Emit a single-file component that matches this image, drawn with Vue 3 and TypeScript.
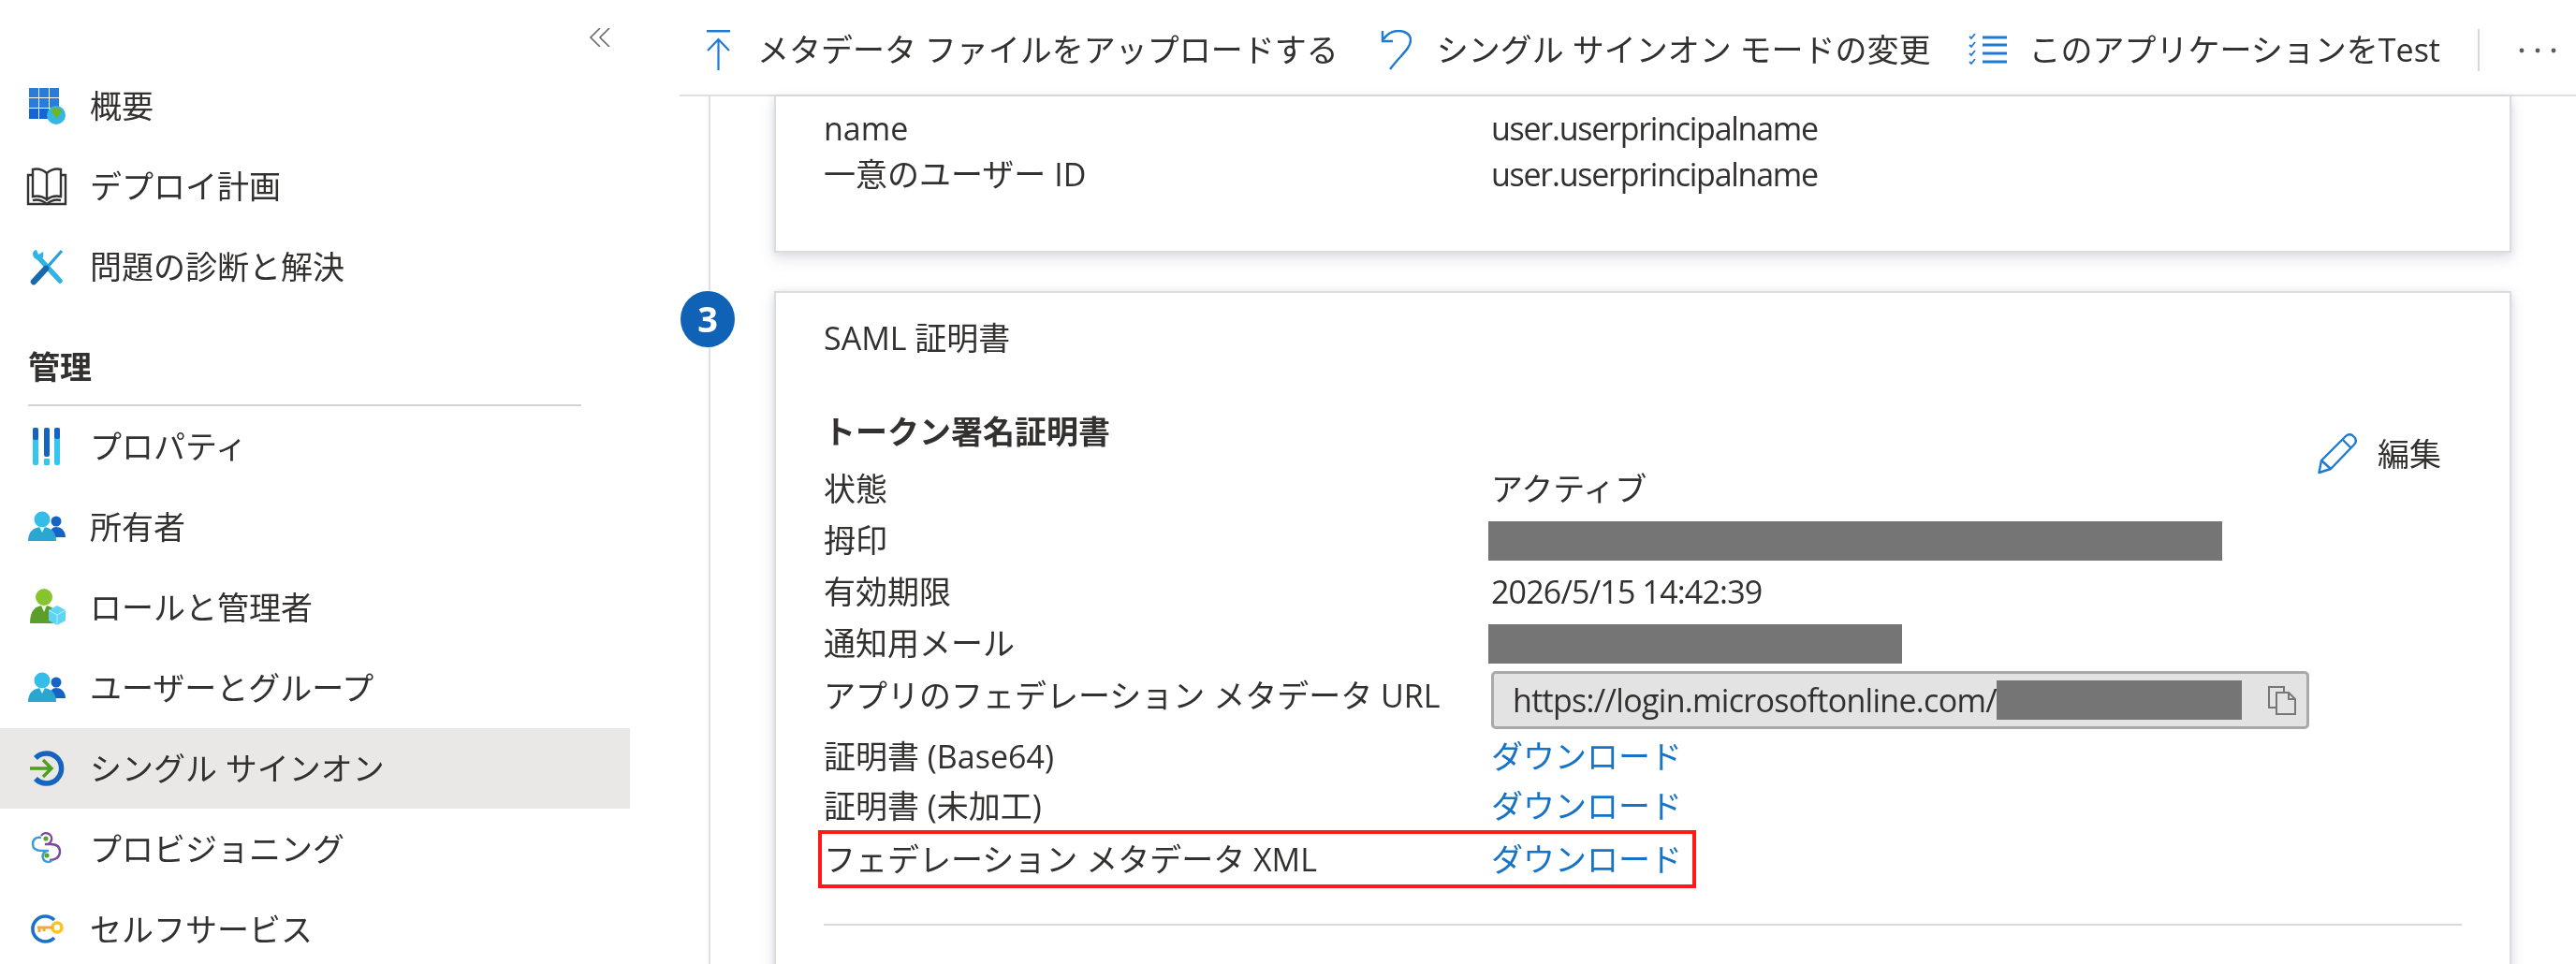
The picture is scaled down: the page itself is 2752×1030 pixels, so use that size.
<script setup lang="ts">
interface Row { label: string; value: string; }
const claims: Row[] = [
  { label: 'name', value: 'user.userprincipalname' },
  { label: '一意のユーザー ID', value: 'user.userprincipalname' },
];
</script>

<template>
  <div class="page">
    <aside class="side">
      <div class="collapse">
        <svg width="22" height="20" viewBox="0 0 22 20" fill="none" stroke="#6b6b6b" stroke-width="1.6"><path d="M11 0 1 10l10 10M21 0 11 10l10 10"/></svg>
      </div>
      <a class="item">
        <svg class="ic" viewBox="0 0 46 46">
          <g fill="#2b7cd8">
            <rect x="4" y="4" width="10" height="10"/><rect x="15" y="4" width="10" height="10"/><rect x="26" y="4" width="10" height="10"/>
            <rect x="4" y="15" width="10" height="10"/><rect x="15" y="15" width="10" height="10"/><rect x="26" y="15" width="10" height="10"/>
            <rect x="4" y="26" width="10" height="11" fill="#1268d0"/><rect x="15" y="26" width="10" height="11" fill="#1268d0"/>
          </g>
          <circle cx="33" cy="33" r="10" fill="#35b6e4"/>
          <path d="M30 25c4-1 7 1 9 4-1 3-3 3-4 6-2 2-3 3-3 0 0-3-4-3-4-6 0-2 1-3 2-4z" fill="#6fb52c"/>
        </svg>
        <span>概要</span>
      </a>
      <a class="item">
        <svg class="ic" viewBox="0 0 46 46" fill="none" stroke="#333" stroke-width="2.4">
          <path d="M8 11H3v31h40V11h-5"/>
          <path d="M8 5q8-2 15 4v28q-7-5-15-3zM38 5q-8-2-15 4v28q7-5 15-3z"/>
          <path d="M8 38q8-2 15 4 7-6 15-4"/>
        </svg>
        <span>デプロイ計画</span>
      </a>
      <a class="item">
        <svg class="ic" viewBox="0 0 46 46" fill="none">
          <path d="M15 14 37 38" stroke="#30b4e4" stroke-width="5.5" stroke-linecap="round"/>
          <path d="M8 9c0 4 3 7 8 7 3-1 4-5 3-9l-5 3-2-5c-2 0-4 2-4 4z" fill="#30b4e4"/>
          <path d="M22 25 39 6" stroke="#2aa0d8" stroke-width="3.2"/>
          <path d="M9 39 22 25" stroke="#1769ad" stroke-width="6.5" stroke-linecap="round"/>
        </svg>
        <span>問題の診断と解決</span>
      </a>
      <h3 class="section">管理</h3>
      <a class="item">
        <svg class="ic" viewBox="0 0 46 46">
          <rect x="8" y="3" width="6" height="40" rx="2" fill="#34c6ee"/><rect x="8" y="3" width="6" height="13" rx="2" fill="#1763c4"/>
          <rect x="20" y="3" width="6" height="31" rx="2" fill="#1763c4"/><rect x="20" y="36" width="6" height="7" rx="1" fill="#34c6ee"/>
          <rect x="31" y="3" width="6" height="40" rx="2" fill="#34c6ee"/><rect x="31" y="3" width="6" height="12" rx="2" fill="#1763c4"/>
        </svg>
        <span>プロパティ</span>
      </a>
      <a class="item">
        <svg class="ic" viewBox="0 0 46 46">
          <circle cx="33" cy="17" r="5.5" fill="#1763c4"/><path d="M26 34c0-8 3-11 7-11s10 3 10 11z" fill="#1763c4"/>
          <circle cx="18" cy="15" r="8.5" fill="#34bde8"/><path d="M3 38c0-10 6-15 15-15s15 5 15 15z" fill="#2ba6d0"/><path d="m15 23 3 6 3-6z" fill="#e6f6fb"/>
        </svg>
        <span>所有者</span>
      </a>
      <a class="item">
        <svg class="ic" viewBox="0 0 46 46">
          <circle cx="20" cy="12" r="9" fill="#86c52f"/><path d="M5 40c0-13 5-19 15-19s14 6 14 19z" fill="#5c9e2b"/><path d="m17 21 3 7 3-7z" fill="#f0f7e4"/>
          <path d="m34 21 9 5v11l-9 5-9-5V26z" fill="#5fd5f4"/><path d="m25 26 9 5 9-5M34 31v11" stroke="#b4ecfb" fill="none"/>
        </svg>
        <span>ロールと管理者</span>
      </a>
      <a class="item">
        <svg class="ic" viewBox="0 0 46 46">
          <circle cx="33" cy="17" r="5.5" fill="#1763c4"/><path d="M26 34c0-8 3-11 7-11s10 3 10 11z" fill="#1763c4"/>
          <circle cx="18" cy="15" r="8.5" fill="#34bde8"/><path d="M3 38c0-10 6-15 15-15s15 5 15 15z" fill="#2ba6d0"/><path d="m15 23 3 6 3-6z" fill="#e6f6fb"/>
        </svg>
        <span>ユーザーとグループ</span>
      </a>
      <a class="item active">
        <svg class="ic" viewBox="0 0 46 46" fill="none">
          <path d="M11 12A16 16 0 1 1 11 34" stroke="#1565c0" stroke-width="5.5"/>
          <path d="M5 23h22M19 14l9 9-9 9" stroke="#4f9e1f" stroke-width="3.4"/>
        </svg>
        <span>シングル サインオン</span>
      </a>
      <a class="item">
        <svg class="ic" viewBox="0 0 46 46" fill="none" stroke-width="2.4">
          <path d="M17 9a6 6 0 1 1 4 9h6c7 0 10 3 10 8 0 6-5 9-11 9" stroke="#7a4a9e"/>
          <path d="M29 35a6 6 0 1 1-4-10h-7c-6 0-10-2-10-7s3-8 9-7" stroke="#3d9bd6"/>
          <circle cx="22" cy="12" r="2.6" fill="#55a630" stroke="none"/><circle cx="23" cy="30" r="2.6" fill="#55a630" stroke="none"/>
        </svg>
        <span>プロビジョニング</span>
      </a>
      <a class="item">
        <svg class="ic" viewBox="0 0 46 46" fill="none">
          <path d="M31 13A13.5 13.5 0 1 0 31 32" stroke="#1a73c9" stroke-width="3.6"/>
          <circle cx="34" cy="21" r="5" stroke="#f8c41e" stroke-width="3.6"/>
          <path d="M13 21h16M15 21v5M20 21v4" stroke="#f3a63a" stroke-width="3"/>
        </svg>
        <span>セルフサービス</span>
      </a>
    </aside>

    <main class="main">
      <header class="toolbar">
        <button class="tool up">
          <svg width="25" height="43" viewBox="0 0 25 43" fill="none" stroke="#1f7bd1" stroke-width="2.2"><path d="M0 1.2h25" stroke-width="2.6"/><path d="M12.5 43V10M1 22 12.5 10 24 22"/></svg>
          <span>メタデータ ファイルをアップロードする</span>
        </button>
        <button class="tool undo">
          <svg width="33" height="43" viewBox="0 0 33 43" fill="none" stroke="#1f7bd1" stroke-width="2.4"><path d="M10 42C20 28 32 20 32 11 32 4 25 1 19 1 13 1 7 4 3 10"/><path d="M2 1v11h11"/></svg>
          <span>シングル サインオン モードの変更</span>
        </button>
        <button class="tool test">
          <svg width="41" height="34" viewBox="0 0 41 34" fill="none" stroke="#1f7bd1"><path d="M15 4h26M15 12h26M15 21h26M15 30h26" stroke-width="3"/><path d="m1 3 2 2 4-5M1 12l2 2 4-5M1 21l2 2 4-5M1 30l2 2 4-5" stroke-width="1.8"/></svg>
          <span>このアプリケーションをTest</span>
        </button>
        <i class="sep"></i>
        <svg class="dots" width="40" height="6" viewBox="0 0 40 6" fill="#5a5a5a"><circle cx="3" cy="3" r="2.4"/><circle cx="20" cy="3" r="2.4"/><circle cx="37" cy="3" r="2.4"/></svg>
      </header>

      <div class="content">
        <section class="card first">
          <div v-for="r in claims" :key="r.label" class="claim">
            <span>{{ r.label }}</span><span class="val">{{ r.value }}</span>
          </div>
        </section>

        <section class="card second">
          <div class="badge">3</div>
          <h2 class="title">SAML 証明書</h2>
          <div class="head">
            <h3>トークン署名証明書</h3>
            <a class="edit">
              <svg width="42" height="44" viewBox="0 0 42 44" fill="none" stroke="#1f7bd1" stroke-width="2.4" stroke-linejoin="round"><path d="M1.500 42 4 29 30 3q3-3 7-1l3 3q2 4-1 7L14 38z"/><path d="M4 29l10 9M27 7l9 9"/></svg>
              <span>編集</span>
            </a>
          </div>
          <div class="row"><span>状態</span><span>アクティブ</span></div>
          <div class="row"><span>拇印</span><i class="mask thumb"></i></div>
          <div class="row"><span>有効期限</span><span class="date">2026/5/15 14:42:39</span></div>
          <div class="row"><span>通知用メール</span><i class="mask mail"></i></div>
          <div class="row url">
            <span>アプリのフェデレーション メタデータ URL</span>
            <div class="box">
              <span class="addr">https://login.microsoftonline.com/</span>
              <i class="mask inner"></i>
              <svg width="32" height="32" viewBox="0 0 32 32" fill="none" stroke="#777" stroke-width="2"><path d="M10 24H2V2h16v6"/><path d="M10 8h13l7 7v16H10zM23 8v7h7"/></svg>
            </div>
          </div>
          <div class="row dl a"><span>証明書 (Base64)</span><a class="link">ダウンロード</a></div>
          <div class="row dl b"><span>証明書 (未加工)</span><a class="link">ダウンロード</a></div>
          <div class="row dl c">
            <span>フェデレーション メタデータ XML</span><a class="link">ダウンロード</a>
            <i class="redbox"></i>
          </div>
          <hr class="rule" />
        </section>
      </div>
    </main>
  </div>
</template>

<style scoped>
.page {
  width: 2752px;
  height: 1030px;
  overflow: hidden;
  display: flex;
  background: #fff;
  color: #323130;
  font: 400 34px/1.2 "Open Sans", "Noto Sans CJK JP", sans-serif;
  filter: blur(0.5px);
}
.side { width: 673px; margin-right: 53px; flex: none; display: flex; flex-direction: column; }
.collapse { height: 70px; flex: none; padding: 30px 21px 0 0; box-sizing: border-box; display: flex; justify-content: flex-end; align-items: flex-start; }
.item { height: 86px; flex: none; display: flex; align-items: center; padding-left: 27px; gap: 23px; }
.item.active { background: #e9e8e6; }
.ic { width: 46px; height: 46px; flex: none; }
.section {
  flex: none;
  margin: 0 52px 0 30px;
  height: 106px;
  box-sizing: border-box;
  padding-top: 44px;
  border-bottom: 2px solid #d4d4d4;
  font-size: 34px;
  font-weight: 600;
  line-height: 40px;
}
.main { flex: 1; min-width: 0; display: flex; flex-direction: column; }
.toolbar { height: 103px; box-sizing: border-box; flex: none; border-bottom: 2px solid #e0e0e0; display: flex; align-items: center; padding: 6px 0 0 29px; }
.tool { all: unset; display: flex; align-items: center; font: inherit; color: inherit; white-space: nowrap; }
.tool svg { flex: none; }
.up { gap: 29px; margin-right: 45px; }
.undo { gap: 27px; margin-right: 40px; }
.test { gap: 24px; margin-right: 40px; }
.sep { width: 2px; height: 45px; background: #d8d8d8; margin-right: 42px; }
.content { flex: 1; min-height: 0; margin-left: 31px; border-left: 2px solid #e0e0e0; padding-left: 68px; width: 1856px; box-sizing: content-box; }
.card {
  width: 1856px;
  box-sizing: border-box;
  background: #fff;
  border: 2px solid #dcdcdc;
  padding: 0 51px;
  box-shadow: 0 6px 14px rgba(100, 115, 140, .22), 0 0 6px rgba(100, 115, 140, .12);
}
.first { height: 167px; border-top: 0; padding-top: 10px; }
.claim { display: grid; grid-template-columns: 713px 1fr; height: 49px; align-items: center; }
.val { letter-spacing: -1.26px; }
.date { letter-spacing: -0.83px; }
.addr { letter-spacing: -0.7px; }
.second { position: relative; margin-top: 41px; height: 760px; padding-top: 23px; }
.badge {
  position: absolute;
  left: -102px;
  top: -2px;
  width: 58px;
  height: 60px;
  border-radius: 50%;
  background: #0f62b5;
  color: #fff;
  font-weight: 700;
  font-size: 38px;
  display: flex;
  align-items: center;
  justify-content: center;
}
.title { margin: 0; font-size: 34px; font-weight: 400; line-height: 50px; height: 50px; }
.head { margin-top: 50px; height: 59px; display: flex; justify-content: space-between; align-items: flex-start; }
.head h3 { margin: 0; font-size: 34px; font-weight: 700; line-height: 50px; }
.edit { margin: 27px 22px 0 0; display: flex; align-items: center; gap: 22px; height: 44px; }
.row { position: relative; display: grid; grid-template-columns: 713px 1fr; height: 55px; align-items: center; }
.mask { display: block; background: #757575; height: 42px; }
.thumb { width: 784px; margin-left: -3px; }
.mail { width: 442px; margin-left: -3px; }
.url { height: 65px; margin-top: 2px; align-items: start; }
.url > span { line-height: 52px; }
.box {
  width: 874px;
  height: 62px;
  box-sizing: border-box;
  background: #e3e3e3;
  border: 3px solid #a9a9a9;
  border-radius: 5px;
  display: flex;
  align-items: center;
  padding-left: 20px;
  white-space: nowrap;
}
.box svg { margin-left: 27px; flex: none; }
.inner { width: 262px; flex: none; }
.dl.a, .dl.b { height: 53px; }
.dl.c { height: 60px; }
.link { color: #1673c5; }
.redbox {
  position: absolute;
  left: -6px;
  top: -1px;
  width: 938px;
  height: 62px;
  box-sizing: border-box;
  border: 4px solid #ff1a1a;
}
.rule { margin: 39px 0 0; border: 0; border-top: 2px solid #d8d8d8; }
</style>
